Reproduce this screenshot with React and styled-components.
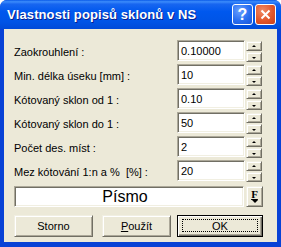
import React from "react";
import styled, { createGlobalStyle } from "styled-components";

const GlobalStyle = createGlobalStyle`
  html, body {
    margin: 0;
    padding: 0;
    background: #ffffff;
  }
  * {
    box-sizing: border-box;
  }
`;

const Window = styled.div`
  width: 281px;
  height: 247px;
  display: flex;
  flex-direction: column;
  background: #0842d6;
  border-radius: 7px 7px 0 0;
  overflow: hidden;
  font-family: "Liberation Sans", Arial, sans-serif;
`;

const TitleBar = styled.div`
  height: 29px;
  flex: none;
  display: flex;
  align-items: center;
  padding: 0 5px 0 7px;
  background: linear-gradient(
    #0a5ae8 0%,
    #3c8cfb 6%,
    #1866f0 14%,
    #0058ee 40%,
    #0054e6 75%,
    #004ad8 100%
  );

  h1 {
    flex: 1;
    margin: 0;
    color: #ffffff;
    font-size: 13px;
    font-weight: bold;
    letter-spacing: 0.1px;
    text-shadow: 1px 1px #0a1e8c;
    white-space: nowrap;
  }
`;

const CaptionButtons = styled.div`
  display: flex;
  gap: 2px;
`;

const CaptionButton = styled.div`
  width: 21px;
  height: 21px;
  border: 1px solid #ffffff;
  border-radius: 3px;
  display: flex;
  align-items: center;
  justify-content: center;
  color: #ffffff;
  font-size: 16px;
  font-weight: bold;
  background: ${(p) =>
    p.$close
      ? "radial-gradient(circle at 35% 30%, #f08a65 0%, #e2572c 55%, #c8401a 100%)"
      : "radial-gradient(circle at 35% 30%, #6aa0ff 0%, #2a6ff0 55%, #1a55d8 100%)"};
`;

const Body = styled.div`
  flex: 1;
  margin: 0 4px 5px 4px;
  background: #ece9d8;
  padding: 11px 14px 0 10px;
  display: flex;
  flex-direction: column;
  font-size: 11px;
  color: #000000;
`;

const Fields = styled.div`
  display: grid;
  grid-template-columns: 162px 68px 17px;
  column-gap: 1px;
  row-gap: 2px;
`;

const Label = styled.div`
  height: 21px;
  display: flex;
  align-items: center;
  padding-top: 2px;
  white-space: pre;
`;

const sunken = `
  background: #ffffff;
  border: 1px solid;
  border-color: #aca899 #ffffff #ffffff #aca899;
  box-shadow: inset 1px 1px #716f64, inset -1px -1px #f1efe2;
`;

const raised = `
  background: #ece9d8;
  border: 1px solid;
  border-color: #f1efe2 #716f64 #716f64 #f1efe2;
  box-shadow: inset 1px 1px #ffffff, inset -1px -1px #aca899;
`;

const Field = styled.div`
  ${sunken}
  height: 21px;
  padding: 1px 0 0 3px;
  display: flex;
  align-items: center;
`;

const Spinner = styled.div`
  display: flex;
  flex-direction: column;
  gap: 1px;
  padding: 1px 1px 0 0;
`;

const SpinButton = styled.div`
  ${raised}
  height: 10px;
  display: flex;
  align-items: center;
  justify-content: center;

  &::after {
    content: "";
    border-left: 2px solid transparent;
    border-right: 2px solid transparent;
    ${(p) =>
      p.$down
        ? "border-top: 2px solid #000; margin-top: 1px;"
        : "border-bottom: 2px solid #000; margin-top: -1px;"}
  }
`;

const FontRow = styled.div`
  margin-top: 4px;
  display: grid;
  grid-template-columns: 230px 17px;
  column-gap: 2px;
`;

const FontBox = styled.div`
  ${sunken}
  height: 21px;
  display: flex;
  align-items: center;
  justify-content: center;
  font-size: 16px;
  padding: 1px 8px 0 0;
`;

const FontButton = styled.div`
  ${raised}
  height: 21px;
  display: flex;
  flex-direction: column;
  align-items: center;
  justify-content: center;

  span {
    font-family: "Liberation Serif", serif;
    font-weight: bold;
    font-size: 11px;
    line-height: 9px;
    text-decoration: underline;
  }

  &::after {
    content: "";
    margin-top: 1px;
    border-left: 3px solid transparent;
    border-right: 3px solid transparent;
    border-top: 3px solid #000;
  }
`;

const Buttons = styled.div`
  margin-top: 8px;
  display: flex;
`;

const Button = styled.div`
  ${raised}
  width: ${(p) => p.$w}px;
  margin-left: ${(p) => p.$ml || 0}px;
  height: 22px;
  display: flex;
  align-items: center;
  justify-content: center;
  position: relative;
  font-size: 11px;

  u {
    text-decoration: underline;
  }

  ${(p) =>
    p.$default &&
    `
    border: 1px solid #000000;
    box-shadow: inset 1px 1px #ffffff, inset -1px -1px #716f64, inset -2px -2px #aca899;
    &::before {
      content: "";
      position: absolute;
      inset: 3px 4px 4px 4px;
      border: 1px dotted #000000;
    }
  `}
`;

const rows = [
  ["Zaokrouhlení :", "0.10000"],
  ["Min. délka úseku [mm] :", "10"],
  ["Kótovaný sklon od 1 :", "0.10"],
  ["Kótovaný sklon do 1 :", "50"],
  ["Počet des. míst :", "2"],
  ["Mez kótování 1:n a %  [%] :", "20"],
];

export default function App() {
  return (
    <>
      <GlobalStyle />
      <Window>
        <TitleBar>
          <h1>Vlastnosti popisů sklonů v NS</h1>
          <CaptionButtons>
            <CaptionButton>?</CaptionButton>
            <CaptionButton $close>
              <svg width="11" height="11" viewBox="0 0 11 11">
                <path
                  d="M1.5 1.5 L9.5 9.5 M9.5 1.5 L1.5 9.5"
                  stroke="#fff"
                  strokeWidth="2"
                />
              </svg>
            </CaptionButton>
          </CaptionButtons>
        </TitleBar>
        <Body>
          <Fields>
            {rows.map(([label, value]) => (
              <React.Fragment key={label}>
                <Label>{label}</Label>
                <Field>{value}</Field>
                <Spinner>
                  <SpinButton />
                  <SpinButton $down />
                </Spinner>
              </React.Fragment>
            ))}
          </Fields>
          <FontRow>
            <FontBox>Písmo</FontBox>
            <FontButton>
              <span>F</span>
            </FontButton>
          </FontRow>
          <Buttons>
            <Button $w={79}>Storno</Button>
            <Button $w={69} $ml={9}>
              <span>
                <u>P</u>oužít
              </span>
            </Button>
            <Button $w={86} $ml={6} $default>
              OK
            </Button>
          </Buttons>
        </Body>
      </Window>
    </>
  );
}
